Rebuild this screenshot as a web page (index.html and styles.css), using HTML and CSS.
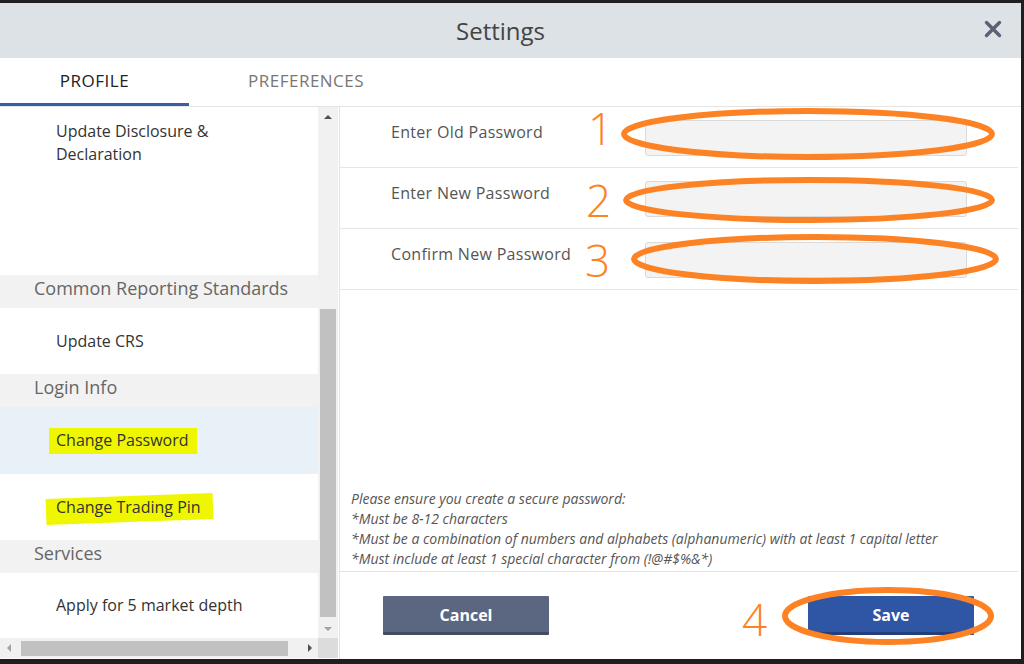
FILE: index.html
```html
<!DOCTYPE html>
<html>
<head>
<meta charset="utf-8">
<link rel="stylesheet" href="styles.css">
</head>
<body>
<div class="dialog">
  <header class="dlg-head">
    <h1 class="dlg-title">Settings</h1>
    <button class="close" aria-label="Close">
      <svg width="18" height="18" viewBox="0 0 18 18"><path d="M2.5 2.5 L15.5 15.5 M15.5 2.5 L2.5 15.5" stroke="#5a6174" stroke-width="3.4" stroke-linecap="round"/></svg>
    </button>
  </header>
  <nav class="tabs">
    <div class="tab active">PROFILE</div>
    <div class="tab">PREFERENCES</div>
  </nav>
  <div class="dlg-body">
    <aside class="side">
      <div class="side-scroll">
        <div class="side-list">
          <div class="item item-first">Update Disclosure &amp;<br>Declaration</div>
          <div class="group">Common Reporting Standards</div>
          <div class="item">Update CRS</div>
          <div class="group">Login Info</div>
          <div class="item selected"><span class="hl">Change Password</span></div>
          <div class="item"><span class="hl hl-tilt">Change Trading Pin</span></div>
          <div class="group">Services</div>
          <div class="item item-last">Apply for 5 market depth</div>
        </div>
        <div class="vbar">
          <div class="arrow up"></div>
          <div class="vtrack"><div class="vthumb"></div></div>
          <div class="arrow down"></div>
        </div>
      </div>
      <div class="hbar">
        <div class="arrow left"></div>
        <div class="htrack"><div class="hthumb"></div></div>
        <div class="arrow right"></div>
        <div class="corner"></div>
      </div>
    </aside>
    <main class="panel">
      <div class="form-row">
        <label class="lbl">Enter Old Password</label>
        <input class="field" type="password">
      </div>
      <div class="form-row">
        <label class="lbl">Enter New Password</label>
        <input class="field" type="password">
      </div>
      <div class="form-row">
        <label class="lbl">Confirm New Password</label>
        <input class="field" type="password">
      </div>
      <div class="note">
        <p>Please ensure you create a secure password:</p>
        <p>*Must be 8-12 characters</p>
        <p>*Must be a combination of numbers and alphabets (alphanumeric) with at least 1 capital letter</p>
        <p>*Must include at least 1 special character from (!@#$%&amp;*)</p>
      </div>
      <div class="footer">
        <button class="btn btn-cancel">Cancel</button>
        <button class="btn btn-save">Save</button>
      </div>
    </main>
  </div>
</div>
<svg class="annot" width="1024" height="664" viewBox="0 0 1024 664">
  <g fill="none" stroke="#fd8223" stroke-width="6">
    <ellipse cx="808" cy="134" rx="184" ry="23"/>
    <ellipse cx="809" cy="200" rx="183" ry="20"/>
    <ellipse cx="815" cy="259" rx="181" ry="22"/>
    <ellipse cx="888" cy="616" rx="103" ry="26"/>
  </g>
  <g class="nums" fill="#fd8223">
    <text x="588" y="145">1</text>
    <text x="586" y="217">2</text>
    <text x="585" y="277">3</text>
    <text x="742" y="636">4</text>
  </g>
</svg>
</body>
</html>
```
FILE: styles.css
```css
* { box-sizing: border-box; }
html, body { margin: 0; padding: 0; }
body {
  width: 1024px;
  height: 664px;
  background: #1f1f1f;
  font-family: "Open Sans", "Noto Sans", sans-serif;
  position: relative;
  overflow: hidden;
  padding-top: 3px;
}
.dialog {
  width: 1021px;
  height: 656px;
  background: #fff;
  display: flex;
  flex-direction: column;
}
.dlg-head {
  height: 55px;
  background: #dde2e6;
  display: flex;
  align-items: center;
  justify-content: center;
  position: relative;
  padding-right: 20px;
}
.dlg-title {
  margin: 0;
  font-weight: 400;
  font-size: 24px;
  color: #444;
  line-height: 1;
}
.close {
  position: absolute;
  right: 18px;
  top: 16px;
  width: 20px;
  height: 20px;
  padding: 0;
  border: 0;
  background: transparent;
  display: flex;
  align-items: center;
  justify-content: center;
}
.tabs {
  height: 49px;
  display: flex;
  border-bottom: 1px solid #e4e4e4;
}
.tab {
  font-size: 17px;
  letter-spacing: 0.5px;
  color: #777;
  line-height: 46px;
  padding: 0 59px;
}
.tab.active {
  width: 189px;
  padding: 0;
  text-align: center;
  color: #222;
  box-shadow: inset 0 -3px 0 #3b5ca7;
}
.dlg-body {
  flex: 1;
  display: flex;
  min-height: 0;
}
.side {
  width: 340px;
  border-right: 1px solid #e2e2e2;
  display: flex;
  flex-direction: column;
}
.side-scroll {
  height: 531px;
  display: flex;
}
.side-list {
  width: 318px;
  overflow: hidden;
}
.item {
  padding-left: 56px;
  font-size: 16px;
  color: #333;
  height: 66px;
  display: flex;
  align-items: center;
  line-height: 23px;
  background: #fff;
}
.item-first {
  height: 168px;
  align-items: flex-start;
  padding-top: 13px;
}
.item.selected {
  background: #e8f0f8;
  height: 67px;
}
.item-last { height: 64px; }
.group {
  height: 33px;
  background: #f2f2f2;
  color: #666;
  font-size: 18px;
  padding-left: 34px;
  line-height: 27px;
}
.hl {
  position: relative;
  z-index: 0;
}
.hl::before {
  content: "";
  position: absolute;
  left: -7px;
  right: -8px;
  top: -1px;
  bottom: -2px;
  background: #eff700;
  z-index: -1;
}
.hl-tilt::before {
  left: -10px;
  right: -12px;
  top: 0;
  bottom: -3px;
  transform: rotate(-2deg);
}
.vbar {
  width: 20px;
  background: #f1f1f1;
  display: flex;
  flex-direction: column;
}
.vtrack { flex: 1; position: relative; }
.vthumb {
  position: absolute;
  left: 2px;
  right: 2px;
  top: 182px;
  height: 308px;
  background: #c1c1c1;
}
.arrow {
  width: 20px;
  height: 20px;
  position: relative;
  flex: none;
}
.arrow::after {
  content: "";
  position: absolute;
  width: 0;
  height: 0;
  border: 4px solid transparent;
}
.arrow.up::after { left: 6px; top: 4px; border-bottom-color: #505050; }
.arrow.down::after { left: 6px; top: 9px; border-top-color: #a3a3a3; }
.arrow.left::after { left: 3px; top: 6px; border-right-color: #a3a3a3; }
.arrow.right::after { left: 10px; top: 6px; border-left-color: #505050; }
.hbar {
  height: 20px;
  display: flex;
  background: #f1f1f1;
  width: 338px;
}
.htrack { flex: 1; position: relative; width: 278px; }
.hthumb {
  position: absolute;
  left: 1px;
  width: 267px;
  top: 3px;
  bottom: 2px;
  background: #c1c1c1;
}
.corner { width: 20px; background: #dcdcdc; }
.panel {
  flex: 1;
  display: flex;
  flex-direction: column;
}
.form-row {
  display: flex;
  align-items: flex-start;
  padding: 13px 0 11px 51px;
  border-bottom: 1px solid #e6e6e6;
  margin-right: 3px;
}
.lbl {
  width: 254px;
  font-size: 16px;
  letter-spacing: 0.3px;
  color: #555;
  line-height: 24px;
}
.field {
  width: 322px;
  height: 36px;
  background: #f3f3f3;
  border: 1px solid #dadada;
  border-radius: 3px;
  margin: 0;
}
.note {
  margin-top: auto;
  padding: 0 0 2px 11px;
  border-bottom: 1px solid #e4e4e4;
  margin-right: 3px;
}
.note p {
  margin: 0;
  font-style: italic;
  font-size: 14px;
  line-height: 20px;
  color: #555;
}
.footer {
  height: 87px;
  display: flex;
  justify-content: space-between;
  align-items: flex-start;
  padding: 24px 47px 0 43px;
}
.btn {
  width: 166px;
  height: 39px;
  border: 0;
  border-radius: 1px;
  color: #fff;
  font-family: "Open Sans", sans-serif;
  font-weight: 700;
  font-size: 16px;
  box-shadow: inset 0 -3px 0 rgba(0,0,0,0.25);
  padding: 0 0 2px;
}
.btn-cancel { background: #5b6780; }
.btn-save { background: #2f55a5; }
.annot {
  position: absolute;
  left: 0;
  top: 0;
  pointer-events: none;
}
.nums text {
  font-family: "Open Sans", sans-serif;
  font-weight: 300;
  font-size: 44px;
}
```
